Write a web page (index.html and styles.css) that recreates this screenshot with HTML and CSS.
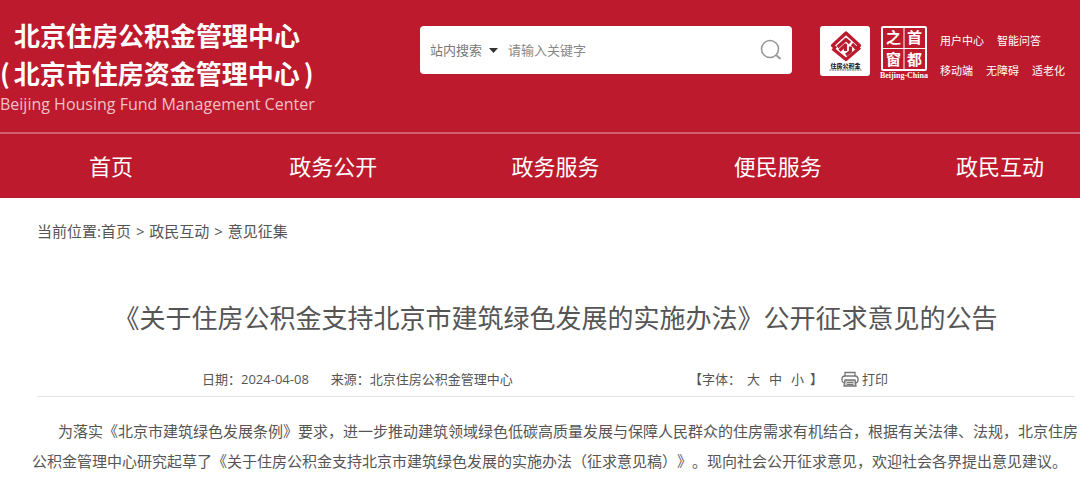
FILE: index.html
```html
<!DOCTYPE html>
<html lang="zh-CN">
<head>
  <meta charset="UTF-8">
  <meta name="viewport" content="width=device-width, initial-scale=1">
  <title>北京住房公积金管理中心</title>
  <link rel="stylesheet" href="styles.css">
</head>
<body>
  <header class="header">
    <div class="top">
      <div class="brand">
        <p class="brand-name">北京住房公积金管理中心</p>
        <p class="brand-alt"><span>(</span>北京市住房资金管理中心<span>)</span></p>
        <p class="brand-en">Beijing Housing Fund Management Center</p>
      </div>
      <form class="search">
        <div class="scope-box">
          <select class="scope" aria-label="搜索范围">
            <option>站内搜索</option>
          </select>
          <svg class="caret" width="9" height="5" viewBox="0 0 9 5"><path d="M0 0h9L4.500 5z" fill="#333"/></svg>
        </div>
        <input class="keyword" type="text" placeholder="请输入关键字" aria-label="关键字">
        <button class="search-btn" type="submit" aria-label="搜索">
          <svg width="22" height="22" viewBox="0 0 22 22" fill="none" stroke="#999" stroke-width="1.600">
            <circle cx="10" cy="10" r="8.500"/>
            <path d="M16 16l4.500 4" stroke-width="2"/>
          </svg>
        </button>
      </form>
      <div class="logos">
        <a href="#" aria-label="住房公积金">
          <svg class="logo" width="50" height="50" viewBox="0 0 50 50">
            <rect width="50" height="50" rx="3" fill="#fff"/>
            <g fill="none" stroke="#bd1a2d" stroke-width="3.200" stroke-linejoin="round">
              <path d="M16 22.500L12.500 19.500L26 7L39.500 19.500L36.500 22.500L32 18"/>
              <path d="M17.500 21L26 13.500L30 17"/>
              <path d="M12.500 22.500L26 33.500L40 21.500"/>
              <path d="M19.500 24.500L25.500 19V25"/>
              <path d="M26 29L30.500 25.500V20.500"/>
            </g>
            <text x="25.500" y="42" class="logo-text">住房公积金</text>
            <path d="M9.500 44h32" stroke="#666" stroke-width="1" stroke-dasharray="2 .5"/>
          </svg>
        </a>
        <a href="#" aria-label="首都之窗">
          <svg class="logo" width="50" height="54" viewBox="0 0 50 54">
            <rect x="3" y="1" width="44" height="43" rx="1" fill="none" stroke="#fff" stroke-width="2"/>
            <path d="M25 2v41M4 22.500h42" stroke="#fff"/>
            <text x="14.500" y="17" class="seal-text">之</text>
            <text x="35.500" y="17" class="seal-text">首</text>
            <text x="14.500" y="39" class="seal-text">窗</text>
            <text x="35.500" y="39" class="seal-text">都</text>
            <text x="25" y="52" class="seal-en">Beijing-China</text>
          </svg>
        </a>
      </div>
      <div class="links">
        <div class="links-row">
          <a href="#">用户中心</a>
          <a href="#">智能问答</a>
        </div>
        <div class="links-row">
          <a href="#">移动端</a>
          <a href="#">无障碍</a>
          <a href="#">适老化</a>
        </div>
      </div>
    </div>
    <nav class="nav">
      <a href="#">首页</a>
      <a href="#">政务公开</a>
      <a href="#">政务服务</a>
      <a href="#">便民服务</a>
      <a href="#">政民互动</a>
    </nav>
  </header>

  <main class="main">
    <div class="crumbs">当前位置:<a href="#">首页</a> <span>&gt;</span> <a href="#">政民互动</a> <span>&gt;</span> <a href="#">意见征集</a></div>
    <h1 class="title">《关于住房公积金支持北京市建筑绿色发展的实施办法》公开征求意见的公告</h1>
    <div class="meta">
      <div class="meta-info">
        <span>日期：2024-04-08</span>
        <span>来源：北京住房公积金管理中心</span>
      </div>
      <div class="meta-tools">
        <div class="sizes">
          <span>【字体：</span>
          <div class="size-btns">
            <button type="button">大</button>
            <button type="button">中</button>
            <button type="button">小</button>
          </div>
          <span>】</span>
        </div>
        <button type="button" class="print">
          <svg width="18" height="16" viewBox="0 0 18 16" fill="none" stroke="#777" stroke-width="1.300">
            <path d="M4 5V1.500h10V5"/>
            <rect x="1" y="5" width="16" height="7" rx="3"/>
            <path d="M4 9h10l1 6H3z" fill="#ccc"/>
            <path d="M6 11.500h6M6 13.500h6" stroke-width="1"/>
          </svg>
          打印
        </button>
      </div>
    </div>
    <p class="content">为落实《北京市建筑绿色发展条例》要求，进一步推动建筑领域绿色低碳高质量发展与保障人民群众的住房需求有机结合，根据有关法律、法规，北京住房公积金管理中心研究起草了《关于住房公积金支持北京市建筑绿色发展的实施办法（征求意见稿）》。现向社会公开征求意见，欢迎社会各界提出意见建议。</p>
  </main>
</body>
</html>
```
FILE: styles.css
```css
* {
  box-sizing: border-box;
}

body {
  margin: 0;
  background: #fff;
  color: #555;
  font-family: "Open Sans", "Noto Sans CJK SC", sans-serif;
  font-size: 15px;
  overflow-x: hidden;
}

a {
  color: inherit;
  text-decoration: none;
}

p {
  margin: 0;
}

button {
  padding: 0;
  border: none;
  background: none;
  color: inherit;
  font: inherit;
  cursor: pointer;
}

/* 页头 */
.header {
  background: #bd1a2d;
  color: #fff;
}

.top {
  display: flex;
  align-items: flex-start;
  height: 132px;
  padding-top: 16px;
}

.brand {
  flex: 1;
  white-space: nowrap;
}

.brand-name,
.brand-alt {
  font-family: "Noto Sans CJK SC", sans-serif;
  font-size: 26px;
  font-weight: bold;
  line-height: 38px;
}

.brand-name {
  padding-left: 14px;
}

.brand-alt {
  display: flex;
  gap: 4px;
}

.brand-en {
  color: #f0c0c6;
  font-size: 16px;
  line-height: 24px;
}

/* 搜索框 */
.search {
  display: flex;
  align-items: center;
  width: 372px;
  height: 48px;
  margin-top: 10px;
  padding: 0 10px;
  border-radius: 4px;
  background: #fff;
}

.scope-box {
  display: flex;
  align-items: center;
  gap: 6px;
  color: #777;
}

.scope {
  appearance: none;
  padding: 0;
  border: none;
  background: none;
  color: inherit;
  font: inherit;
  font-size: 13px;
}

.caret {
  pointer-events: none;
}

.keyword {
  flex: 1;
  min-width: 0;
  padding: 0 10px;
  border: none;
  outline: none;
  background: none;
  font: inherit;
  font-size: 13px;
}

.keyword::placeholder {
  color: #888;
}

.search-btn svg,
.logo {
  display: block;
}

.logos {
  display: flex;
  gap: 9px;
  margin: 10px 11px 0 28px;
}

.logo-text {
  fill: #222;
  font-family: "Noto Sans CJK SC", sans-serif;
  font-size: 6px;
  font-weight: 900;
  text-anchor: middle;
}

.seal-text {
  fill: #fff;
  font-family: "Noto Sans CJK SC", sans-serif;
  font-size: 15px;
  font-weight: bold;
  text-anchor: middle;
}

.seal-en {
  fill: #fff;
  font-family: "Liberation Serif", serif;
  font-size: 8px;
  font-weight: bold;
  text-anchor: middle;
}

.links {
  width: 140px;
  margin-top: 10px;
  font-size: 11px;
  line-height: 30px;
  white-space: nowrap;
}

.links-row {
  display: flex;
  gap: 13px;
}

/* 导航比窗口略宽 */
.nav {
  display: grid;
  grid-template-columns: repeat(5, 1fr);
  margin-right: -31px;
  border-top: 2px solid #d0606c;
  font-size: 22px;
  line-height: 64px;
  text-align: center;
}

/* 正文 */
.main {
  padding: 16px 6px 0 37px;
}

.crumbs {
  line-height: 34px;
}

.crumbs span {
  margin: 0 1px;
}

.title {
  margin: 48px 0 0;
  font-size: 26px;
  font-weight: normal;
  line-height: 44px;
  text-align: center;
  text-spacing-trim: space-all;
}

.meta {
  display: flex;
  justify-content: space-between;
  margin-top: 22px;
  padding: 0 186px 0 165px;
  border-bottom: 1px solid #e3e3e3;
  font-size: 13px;
  line-height: 34px;
  text-spacing-trim: space-all;
}

.meta-info {
  display: flex;
  gap: 22px;
}

.meta-tools {
  display: flex;
  gap: 18px;
}

.sizes {
  display: flex;
  gap: 6px;
}

.size-btns {
  display: flex;
  gap: 9px;
}

.print {
  display: flex;
  align-items: center;
  gap: 3px;
}

.content {
  margin: 19px -4px 0 -5px;
  line-height: 30px;
  text-indent: 26px;
  text-spacing-trim: space-all;
}
```
